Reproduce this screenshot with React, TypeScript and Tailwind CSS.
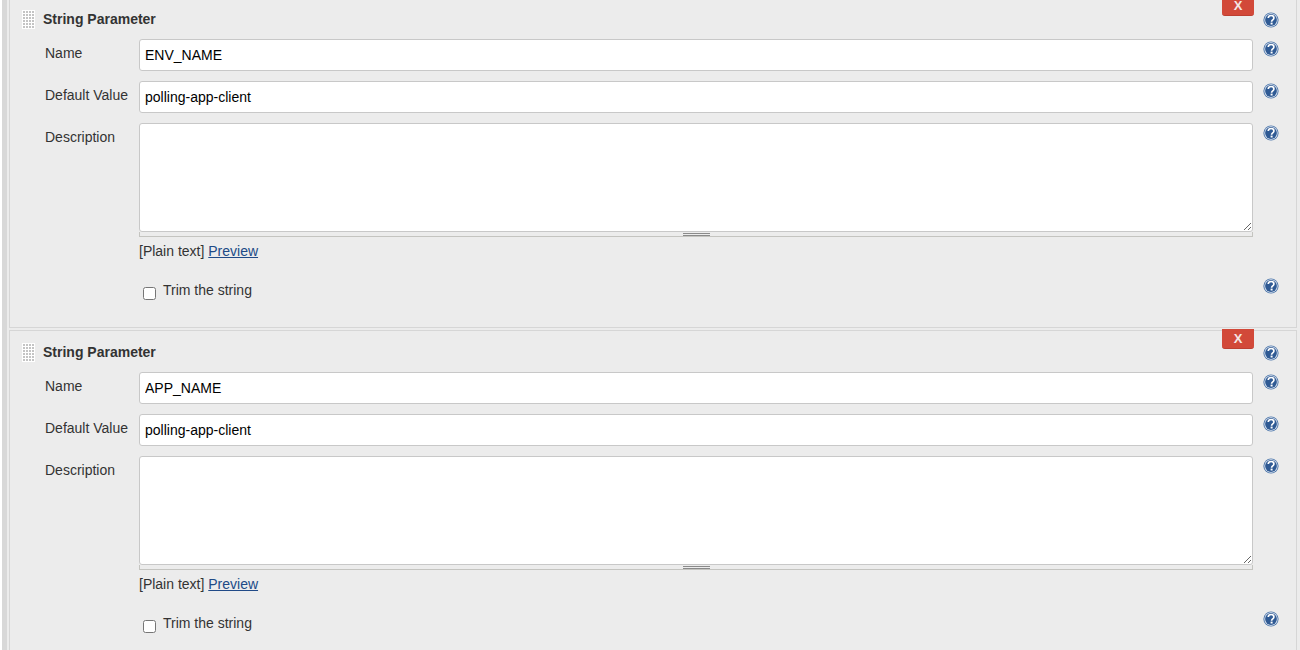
function HelpIcon() {
  return (
    <svg width="16" height="16" viewBox="0 0 16 16" className="block shrink-0">
      <circle cx="8" cy="8" r="7.6" fill="#4a74aa" />
      <circle cx="8" cy="8" r="6.7" fill="#e4eaf2" />
      <circle cx="8" cy="8" r="5.9" fill="#2f5a94" />
      <path d="M5.2 6C5.4 4.4 6.5 3.5 8.1 3.5c1.7 0 2.8 1 2.8 2.4 0 2-2.3 1.9-2.3 3.8" fill="none" stroke="#fff" strokeWidth="1.7" />
      <rect x="7.6" y="10.6" width="2" height="1.9" fill="#fff" />
    </svg>
  );
}

function Grip() {
  const dots: React.ReactElement[] = [];
  for (let r = 0; r < 6; r++) {
    for (let c = 0; c < 4; c++) {
      dots.push(<rect key={`${r}-${c}`} x={1 + c * 3} y={1 + r * 3} width="2" height="2" fill="#c4c4c4" />);
    }
  }
  return (
    <svg width="13" height="19" viewBox="0 0 13 19" className="block shrink-0 bg-white">
      {dots}
    </svg>
  );
}

function Row({ label, value }: { label: string; value: string }) {
  return (
    <div className="flex h-[32px] items-start">
      <div className="w-[129px] shrink-0 pl-[35px] pt-[4px] text-[#333]">{label}</div>
      <input
        readOnly
        value={value}
        className="h-[32px] w-[1114px] shrink-0 rounded-[3px] border border-[#c8c8c8] bg-white px-[5px] text-[14px] text-black outline-none"
      />
      <div className="ml-[10px] pt-[2px]">
        <HelpIcon />
      </div>
    </div>
  );
}

function Panel({ env }: { env: string }) {
  return (
    <div className="relative h-[331px] border border-[#d6d6d6] bg-[#ececec] pt-[12px]">
      <button className="absolute left-[1212px] top-[-2px] flex h-[20px] w-[32px] items-center justify-center rounded-b-[3px] border-b border-[#bd3f31] bg-[#d24939] text-[13px] font-bold text-[#f5e6e4]">
        X
      </button>
      <div className="flex h-[19px] items-start pl-[12px]">
        <Grip />
        <div className="ml-[8px] w-[1220px] text-[14px] leading-[19px] font-bold text-[#333]">String Parameter</div>
        <div className="mt-[2px]">
          <HelpIcon />
        </div>
      </div>
      <div className="mt-[10px] flex flex-col gap-[10px]">
        <Row label="Name" value={env} />
        <Row label="Default Value" value="polling-app-client" />
      </div>
      <div className="mt-[10px] flex items-start">
        <div className="w-[129px] shrink-0 pl-[35px] pt-[4px] text-[#333]">Description</div>
        <div className="w-[1114px] shrink-0">
          <textarea
            readOnly
            className="block h-[109px] w-full rounded-[3px] border border-[#c8c8c8] bg-white"
          />
          <div className="flex h-[5px] justify-center border-x border-b border-[#c4c4c0] bg-[#ececec]">
            <div className="mt-[1px] h-[3px] w-[27px] border-y border-[#8a8a8a]" />
          </div>
          <div className="mt-[4px] text-[#333]">
            [Plain text] <a className="text-[#204a87] underline">Preview</a>
          </div>
        </div>
        <div className="ml-[10px] pt-[2px]">
          <HelpIcon />
        </div>
      </div>
      <div className="mt-[18px] flex h-[20px] items-start">
        <div className="flex w-[1243px] shrink-0 items-start pl-[133px]">
          <input type="checkbox" readOnly className="mt-[7px] h-[13px] w-[13px]" />
          <span className="ml-[7px] text-[#333]">Trim the string</span>
        </div>
        <div className="ml-[10px] -mt-[2px]">
          <HelpIcon />
        </div>
      </div>
    </div>
  );
}

export default function App() {
  return (
    <div className="h-[650px] w-[1300px] overflow-hidden bg-[#ececec] font-['Liberation_Sans',Arial,sans-serif] text-[14px]">
      <div className="mt-[-3px] flex">
        <div className="h-[700px] w-[2px] shrink-0 bg-white" />
        <div className="h-[700px] w-[5px] shrink-0 bg-[#d8d8d8]" />
        <div className="w-[2px] shrink-0" />
        <div className="flex w-[1288px] shrink-0 flex-col gap-[2px]">
          <Panel env="ENV_NAME" />
          <Panel env="APP_NAME" />
        </div>
      </div>
    </div>
  );
}
